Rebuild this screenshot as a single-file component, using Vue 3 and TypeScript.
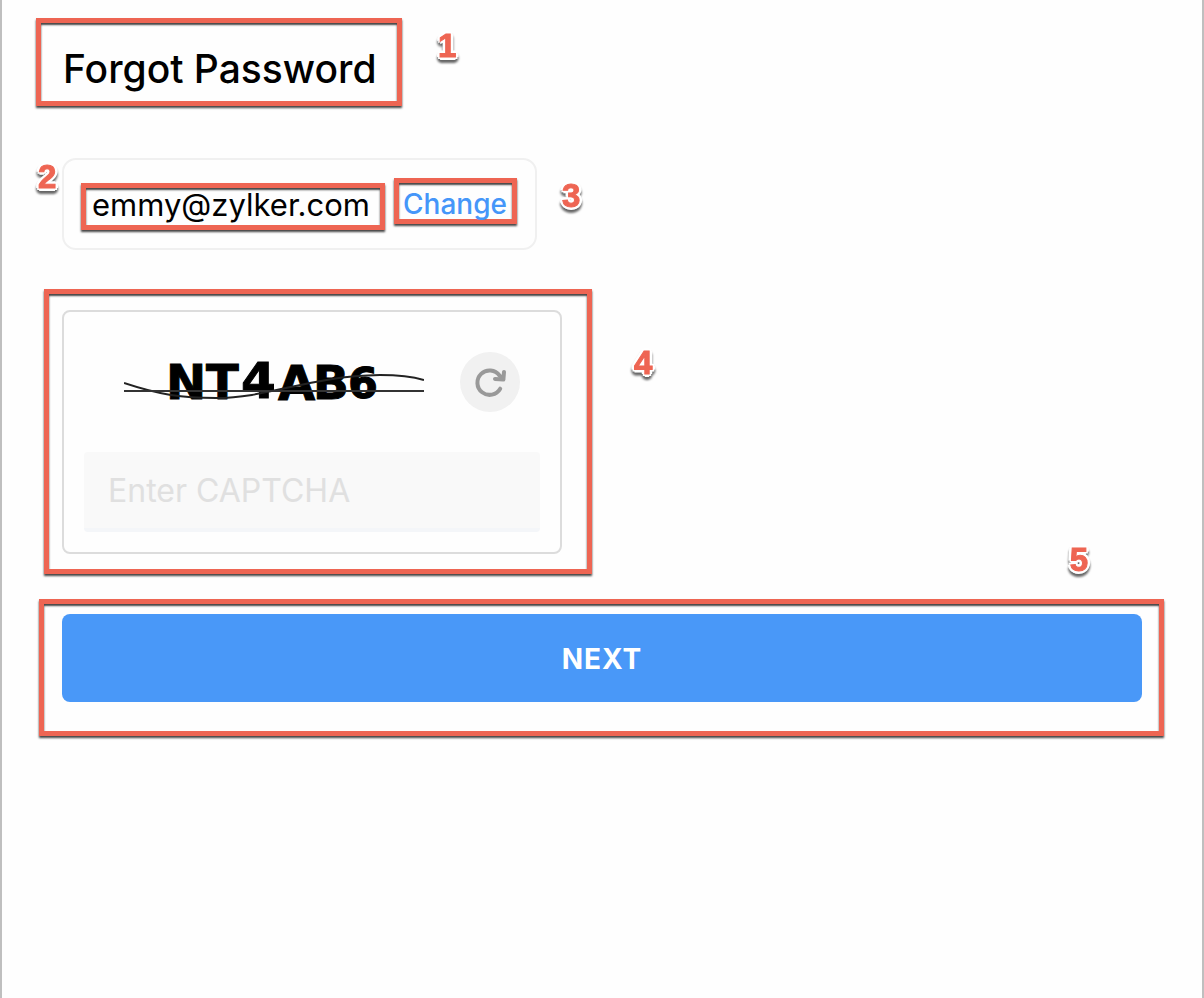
<script setup lang="ts">
import { ref } from 'vue'

interface Glyph {
  char: string
  x: number
  y: number
  size: number
}

const email = ref('emmy@zylker.com')
const captcha = ref('')

const glyphs: Glyph[] = [
  { char: 'N', x: 42, y: 47, size: 48 },
  { char: 'T', x: 82, y: 47, size: 48 },
  { char: '4', x: 117, y: 46, size: 50 },
  { char: 'A', x: 154, y: 48, size: 48 },
  { char: 'B', x: 189, y: 47, size: 47 },
  { char: '6', x: 224, y: 46, size: 43 },
]
</script>

<template>
  <main class="page">
    <form class="form" @submit.prevent>
      <div class="marked title">
        <h1>Forgot Password</h1>
        <span class="mark mark-title">1</span>
      </div>

      <div class="account">
        <span class="marked email">{{ email }}<span class="mark mark-email">2</span></span>
        <span class="marked change">
          <a href="#">Change</a>
          <span class="mark mark-change">3</span>
        </span>
      </div>

      <div class="marked captcha-area">
        <div class="captcha">
          <div class="challenge">
            <svg class="captcha-image" viewBox="0 0 300 60" role="img" aria-label="CAPTCHA image">
              <text v-for="g in glyphs" :key="g.char" :x="g.x" :y="g.y" :font-size="g.size">{{ g.char }}</text>
              <path d="M0 31C36 43 58 46 92 46C145 46 185 24 256 23C275 23 290 25 300 28" />
              <path class="level" d="M0 39H300" />
            </svg>
            <button class="reload" type="button" aria-label="Reload CAPTCHA">
              <svg viewBox="0 0 32 32" aria-hidden="true">
                <path d="M26.200 22.700A12.200 12.200 0 1 1 25.500 9.500L28.500 12.500" />
                <path d="M30 6L29.400 13.600L21 13" />
              </svg>
            </button>
          </div>
          <input v-model="captcha" type="text" placeholder="Enter CAPTCHA" aria-label="Enter CAPTCHA" />
        </div>
        <span class="mark mark-captcha">4</span>
      </div>

      <div class="marked submit">
        <button class="next" type="submit">NEXT</button>
        <span class="mark mark-submit">5</span>
      </div>
    </form>
  </main>
</template>

<style>
body {
  margin: 0;
  background: #fefefe;
}
</style>

<style scoped>
.page {
  box-sizing: border-box;
  min-height: 100vh;
  padding: 18px 38px 40px 34px;
  border: solid #bfbfbf;
  border-width: 0 2px;
  background: #fefefe;
  color: #000;
  font-family: Inter, "Liberation Sans", sans-serif;
}

.form {
  display: flex;
  flex-direction: column;
  align-items: flex-start;
}

/* Call-out frame drawn around a part of the form */
.marked {
  position: relative;
  box-sizing: border-box;
  border: 5px solid #ee6553;
  box-shadow: 0 2px 2px #444, inset 0 2px 2px #444;
}

.mark {
  position: absolute;
  color: #ee6553;
  font: bold 33px/32px "Liberation Sans", Arial, sans-serif;
  -webkit-text-stroke: 1px #ee6553;
  text-shadow: 3px 0 #fff, -3px 0 #fff, 0 3px #fff, 0 -3px #fff, 2px 2px #fff, -2px 2px #fff,
    2px -2px #fff, -2px -2px #fff;
  filter: drop-shadow(0 3px 1px #666);
}

.mark-title {
  top: 7px;
  left: 397px;
}

.mark-email {
  top: -27px;
  left: -48px;
}

.mark-change {
  top: -3px;
  left: 163px;
}

.mark-captcha {
  top: 53px;
  left: 585px;
}

.mark-submit {
  top: -60px;
  right: 71px;
}

.title {
  padding: 21px 20px 7px 22px;
}

h1 {
  margin: 0;
  font-size: 39px;
  font-weight: 500;
  line-height: 50px;
  white-space: nowrap;
}

.account {
  display: flex;
  gap: 9px;
  box-sizing: border-box;
  height: 92px;
  margin: 52px 0 0 26px;
  padding: 18px;
  border: 2px solid #f0f0f0;
  border-radius: 14px;
}

.email {
  height: 47px;
  margin-top: 5px;
  margin-left: -1px;
  padding: 0 10px 0 6px;
  font-size: 31px;
  line-height: 33px;
}

.change {
  height: 46px;
  padding: 0 5px 0 4px;
  font-size: 28px;
  font-weight: 500;
  line-height: 42px;
}

.change a {
  color: #4596f9;
  text-decoration: none;
}

.captcha-area {
  width: 548px;
  max-width: 100%;
  margin: 39px 0 0 8px;
  padding: 16px 25px 15px 13px;
}

.captcha {
  padding: 38px 20px 20px;
  border: 2px solid #dcdcdc;
  border-radius: 8px;
}

.challenge {
  display: flex;
  align-items: center;
  gap: 36px;
  height: 64px;
  margin-bottom: 38px;
  padding-left: 40px;
}

.captcha-image {
  width: 300px;
  height: 60px;
}

.captcha-image text {
  font-family: "DejaVu Sans", sans-serif;
  font-weight: bold;
  stroke: #000;
  stroke-width: 1;
}

.captcha-image path {
  fill: none;
  stroke: #222;
  stroke-width: 2;
}

.captcha-image .level {
  stroke: #333;
}

.reload {
  display: grid;
  place-items: center;
  width: 60px;
  height: 60px;
  padding: 0;
  border: 0;
  border-radius: 50%;
  background: #f1f1f1;
}

.reload svg {
  width: 32px;
  height: 32px;
  fill: none;
  stroke: #999;
  stroke-width: 4;
  stroke-linecap: round;
  stroke-linejoin: round;
}

input {
  display: block;
  box-sizing: border-box;
  width: 100%;
  height: 80px;
  padding: 0 24px;
  border: 0;
  border-bottom: 4px solid #f4f6f9;
  border-radius: 4px;
  outline: 0;
  background: #f9f9f9;
  color: #000;
  font: 32px Inter, sans-serif;
}

input::placeholder {
  color: #e0e0e0;
  opacity: 1;
}

.submit {
  align-self: stretch;
  margin: 25px 0 0 3px;
  padding: 10px 17px 29px 18px;
}

.next {
  width: 100%;
  height: 88px;
  padding: 2px 0 0;
  border: 0;
  border-radius: 8px;
  background: #4998f8;
  color: #fff;
  font: 700 28px Inter, sans-serif;
  letter-spacing: 1px;
}
</style>
